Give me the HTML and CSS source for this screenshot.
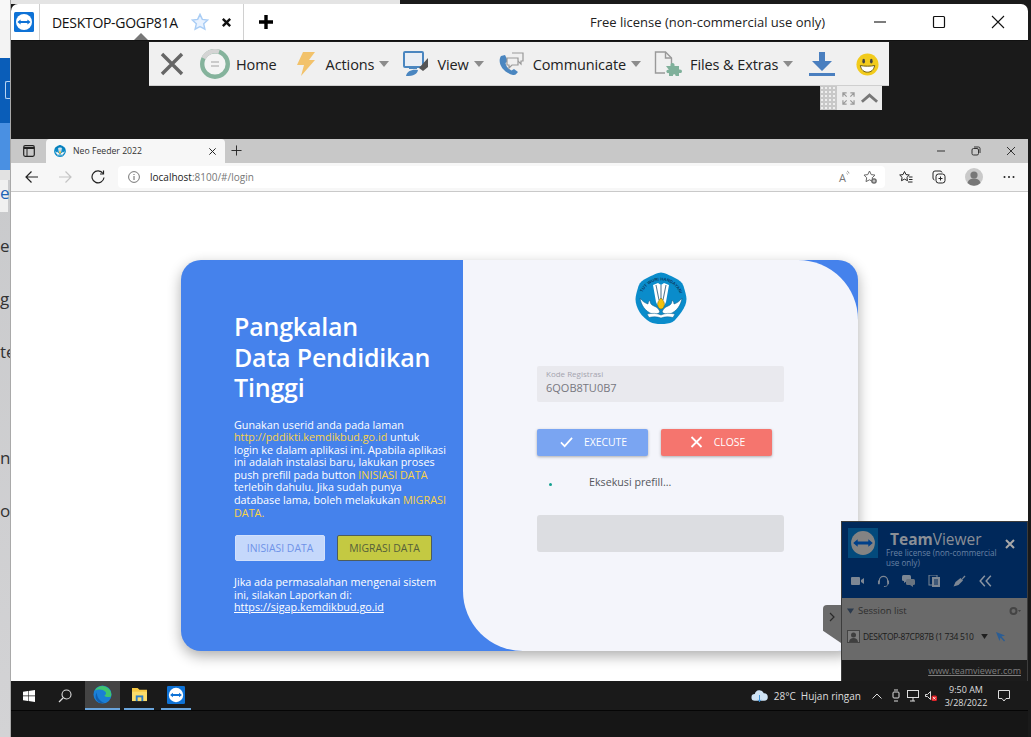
FILE: index.html
```html
<!DOCTYPE html>
<html lang="en">
<head>
    <meta charset="UTF-8">
    <meta name="viewport" content="width=device-width, initial-scale=1.0">
    <title>Neo Feeder 2022 - TeamViewer</title>
    <link rel="stylesheet" href="styles.css">
</head>
<body>
    <svg class="svg-defs" width="0" height="0">
        <defs>
            <symbol id="tv-logo" viewBox="0 0 20 20">
                <rect width="20" height="20" rx="1.5" fill="#0e72d6"/>
                <circle cx="10" cy="10" r="8" fill="#fff"/>
                <path d="M3.4 10l3.2-2.6v1.6h6.8V7.4l3.2 2.6-3.2 2.6V11H6.6v1.6z" fill="#0e72d6"/>
            </symbol>
            <symbol id="emblem" viewBox="0 0 52 52">
                <path d="M26 .5c3 0 9 3 14 5.500 4 2 7 4 8.500 8 1.500 5 3 10 3 13 0 4-2 9-5 13-3 4-6 8-9 10-3 1.500-7 2-11.500 2s-8-.5-11-2c-4-2.500-8-6-10.500-10C2 36 .5 31 .5 27c0-3 1.500-8 3-13 1.500-4 4.500-6 8.500-8 5-2.500 11-5.500 14-5.500z" fill="#0a8ccb"/>
                <path id="emblem-ring" d="M6.500 24a20 20 0 0 1 39 0" fill="none"/>
                <path d="M5 26c1 7 5 13 12 16 3 1 6 0 8-2-1-3-3-5-6-6-3-1-4-3-4-6-1 1-2 2-2 4-3-1-6-3-8-6zM47 26c-1 7-5 13-12 16-3 1-6 0-8-2 1-3 3-5 6-6 3-1 4-3 4-6 1 1 2 2 2 4 3-1 6-3 8-6z" fill="#fff" stroke="#0a5f8e" stroke-width=".6"/>
                <path d="M23 11l3 2 3-2 5 2-3 17c-1 3-3 5-5 5s-4-2-5-5l-3-17z" fill="#fff"/>
                <path d="M21 13l3 15M26 13v14M31 13l-3 15" stroke="#557a94" stroke-width="1.100"/>
                <path d="M12 42c5-1 10-1 14 1 4-2 9-2 14-1l-2 3.500c-4-1-8-1-12 .5-4-1.500-8-1.500-12-.5z" fill="#fff" stroke="#0a5f8e" stroke-width=".5"/>
                <path d="M26 26c2.600 2.500 3.400 4.500 3.400 6.500S28 37 26 37s-3.400-2.500-3.400-4.500.8-4 3.400-6.500z" fill="#f4c20d" stroke="#6b5c10" stroke-width=".5"/>
                <text class="emblem-text"><textPath href="#emblem-ring" startOffset="7%">TUT WURI HANDAYANI</textPath></text>
            </symbol>
            <symbol id="caret" viewBox="0 0 10 6">
                <path d="M0 0h10L5 6z" fill="#8c8c8c"/>
            </symbol>
        </defs>
    </svg>

    <div class="screen">
        <div class="backdrop">
            <div class="backdrop-top"></div>
            <div class="backdrop-hero"><span class="backdrop-icon"></span></div>
            <div class="backdrop-accent"></div>
            <div class="backdrop-rule"></div>
            <ul class="backdrop-list">
                <li class="is-link">e</li>
                <li>e</li>
                <li>g</li>
                <li>te</li>
                <li></li>
                <li>n</li>
                <li>o</li>
            </ul>
        </div>

        <div class="remote-column">
            <div class="top-gap"></div>
            <div class="tv-window">
                <header class="tv-titlebar">
                    <div class="tv-logo-cell">
                        <svg class="tv-logo"><use href="#tv-logo"/></svg>
                    </div>
                    <div class="tv-tab">
                        <span class="tv-tab-name">DESKTOP-GOGP81A</span>
                        <svg class="tv-star" viewBox="0 0 20 20"><path d="M10 1.500l2.600 5.600 6 .7-4.500 4.100 1.300 6L10 15l-5.400 3 1.300-6L1.400 7.800l6-.7z" fill="#e8f2ff" stroke="#a9cdf5" stroke-width="1.600"/></svg>
                        <svg class="tv-tab-close" viewBox="0 0 12 12"><path d="M2 2l8 8M10 2l-8 8" stroke="#111" stroke-width="2.600"/></svg>
                        <span class="tv-notch"></span>
                    </div>
                    <svg class="tv-new-tab" viewBox="0 0 14 14"><path d="M7 0v14M0 7h14" stroke="#000" stroke-width="3.400"/></svg>
                    <span class="tv-license">Free license (non-commercial use only)</span>
                    <div class="tv-window-buttons">
                        <svg viewBox="0 0 14 14"><path d="M1 7h12" stroke="#111" stroke-width="1.100"/></svg>
                        <svg viewBox="0 0 14 14"><rect x="1.500" y="1.500" width="11" height="11" rx="1" fill="none" stroke="#111" stroke-width="1.200"/></svg>
                        <svg viewBox="0 0 14 14"><path d="M1 1l12 12M13 1L1 13" stroke="#111" stroke-width="1.100"/></svg>
                    </div>
                </header>

                <div class="tv-stage">
                    <div class="tv-toolbar-wrap">
                        <nav class="tv-toolbar">
                            <svg class="tb-close" viewBox="0 0 24 24"><path d="M2 2l20 20M22 2L2 22" stroke="#666" stroke-width="3.400"/></svg>
                            <div class="tb-item tb-home">
                                <svg class="tb-icon-home" viewBox="0 0 30 30"><circle cx="15" cy="15" r="12.800" fill="#f4f4f4" stroke="#85b39c" stroke-width="4.400"/><path d="M3.600 9.200A12.800 12.800 0 0 1 19 2.800" fill="none" stroke="#d4d4d4" stroke-width="4.400"/><path d="M11 13h8M11 17h8" stroke="#bdbdbd" stroke-width="1.500"/></svg>
                                <span>Home</span>
                            </div>
                            <div class="tb-item tb-actions">
                                <svg class="tb-icon-bolt" viewBox="0 0 20 26"><path d="M7 1h12l-6 8h6L5 25l3-11H1z" fill="#f2c26b"/></svg>
                                <span>Actions</span>
                                <svg class="tb-caret"><use href="#caret"/></svg>
                            </div>
                            <div class="tb-item tb-view">
                                <svg class="tb-icon-view" viewBox="0 0 26 26"><rect x="1" y="1" width="19" height="15" rx="1" fill="#e9eef5" stroke="#4a86c0" stroke-width="2"/><path d="M6 16h8v2H6z" fill="#4a86c0"/><path d="M16 17l9-10v9l-5 4z" fill="#555"/><path d="M3 25c1-5 6-7 12-6-1 4-4 6-12 6z" fill="#4a86c0"/></svg>
                                <span>View</span>
                                <svg class="tb-caret"><use href="#caret"/></svg>
                            </div>
                            <div class="tb-item tb-communicate">
                                <svg class="tb-icon-comm" viewBox="0 0 28 26"><path d="M4 5C0 11 5 21 16 24c3 .5 4-2 5-3l-4-3-2.500 1.500C11 18 9 15 8.500 12L11 10 8 4z" fill="#4a86c0"/><path d="M15 2h11v8h-2v3l-3-3h-2" fill="#f0f0f0" stroke="#999" stroke-width="1.200"/><path d="M10 7h11v7h-6l-3 3v-3h-2z" fill="#f0f0f0" stroke="#999" stroke-width="1.200"/></svg>
                                <span>Communicate</span>
                                <svg class="tb-caret"><use href="#caret"/></svg>
                            </div>
                            <div class="tb-item tb-files">
                                <svg class="tb-icon-files" viewBox="0 0 30 26"><path d="M11 22H1.500V1h10l6 6v6" fill="none" stroke="#999" stroke-width="1.400"/><path d="M11.500 1v6h6" fill="none" stroke="#999" stroke-width="1.400"/><path d="M12 15h4.500c-1-4 5-4 4 0H25v3.500c4-1 4 4.500 0 3.500v3h-3.500c.5-2.500-3-2.500-2.500 0H15v-3c-3.500 1-3.500-4 0-3z" fill="#7fb09a"/></svg>
                                <span>Files &amp; Extras</span>
                                <svg class="tb-caret"><use href="#caret"/></svg>
                            </div>
                            <svg class="tb-download" viewBox="0 0 26 26"><path d="M10 1h6v9h7L13 20 3 10h7z" fill="#4a7fbf"/><rect y="22" width="26" height="3" fill="#4a7fbf"/></svg>
                            <svg class="tb-smiley" viewBox="0 0 24 24"><circle cx="12" cy="12" r="11.500" fill="#f2cb1c"/><ellipse cx="8" cy="8.500" rx="1.400" ry="2.400" fill="#444"/><ellipse cx="16" cy="8.500" rx="1.400" ry="2.400" fill="#444"/><path d="M4.500 13c3 1 12 1 15 0-1 5-4 7-7.500 7s-6.500-2-7.500-7z" fill="#fff" stroke="#6b5a10" stroke-width="1"/></svg>
                        </nav>
                        <div class="tv-toolbar-handle">
                            <span class="handle-grip"></span>
                            <svg viewBox="0 0 14 14" class="handle-full"><path d="M1 5V1h4M9 1h4v4M13 9v4H9M5 13H1V9M1 1l4 4M13 1L9 5M13 13L9 9M1 13l4-4" fill="none" stroke="#999" stroke-width="1.300"/></svg>
                            <svg viewBox="0 0 20 12" class="handle-up"><path d="M2 10l8-7 8 7" fill="none" stroke="#777" stroke-width="3"/></svg>
                        </div>
                    </div>
                </div>

                <div class="edge">
                    <div class="edge-tabs">
                        <div class="edge-sidebar-btn">
                            <svg viewBox="0 0 12 12"><rect x=".7" y=".7" width="10.600" height="10.600" rx="1.500" fill="none" stroke="#222" stroke-width="1.200"/><path d="M1 3h10" stroke="#222" stroke-width="2"/><path d="M4 3v8" stroke="#222" stroke-width="1"/></svg>
                        </div>
                        <div class="edge-tab">
                            <svg class="edge-favicon"><use href="#emblem"/></svg>
                            <span>Neo Feeder 2022</span>
                            <svg class="edge-tab-close" viewBox="0 0 10 10"><path d="M1.500 1.500l7 7M8.500 1.500l-7 7" stroke="#222" stroke-width="1.100"/></svg>
                        </div>
                        <svg class="edge-new-tab" viewBox="0 0 12 12"><path d="M6 .5v11M.5 6h11" stroke="#222" stroke-width="1"/></svg>
                        <div class="edge-window-buttons">
                            <svg viewBox="0 0 10 10"><path d="M1 5h8" stroke="#333" stroke-width="1"/></svg>
                            <svg viewBox="0 0 10 10"><rect x="1" y="2.500" width="6.500" height="6.500" rx="1.500" fill="none" stroke="#333"/><path d="M3 1h4.500A1.500 1.500 0 0 1 9 2.500V7" fill="none" stroke="#333"/></svg>
                            <svg viewBox="0 0 10 10"><path d="M1 1l8 8M9 1L1 9" stroke="#333" stroke-width="1"/></svg>
                        </div>
                    </div>
                    <div class="edge-nav">
                        <svg class="nav-btn" viewBox="0 0 14 14"><path d="M13 7H1M6.500 1.500L1 7l5.500 5.500" fill="none" stroke="#222" stroke-width="1.200"/></svg>
                        <svg class="nav-btn" viewBox="0 0 14 14"><path d="M1 7h12M7.500 1.500L13 7l-5.500 5.500" fill="none" stroke="#c4c4c4" stroke-width="1.200"/></svg>
                        <svg class="nav-btn" viewBox="0 0 14 14"><path d="M12 3.500A6 6 0 1 0 13 7.500" fill="none" stroke="#222" stroke-width="1.200"/><path d="M12.500 .5v3.500H9" fill="none" stroke="#222" stroke-width="1.200"/></svg>
                        <div class="address">
                            <svg class="address-info" viewBox="0 0 12 12"><circle cx="6" cy="6" r="5.400" fill="none" stroke="#666" stroke-width=".9"/><path d="M6 5v4M6 3v1" stroke="#666" stroke-width="1"/></svg>
                            <span class="address-url"><b>localhost</b>:8100/#/login</span>
                            <span class="address-read">A<svg viewBox="0 0 5 7"><path d="M1 1a3 3 0 0 1 2 2.500M.5 3a2 2 0 0 1 1 1.500" fill="none" stroke="#777" stroke-width=".7"/></svg></span>
                            <svg class="address-fav" viewBox="0 0 14 14"><path d="M6.500 1l1.700 3.600 3.800.5-2.800 2.700.7 3.800-3.400-1.800L3 11.600l.7-3.800L1 5.100l3.800-.5z" fill="none" stroke="#666"/><circle cx="11" cy="11" r="2.800" fill="#666"/><path d="M11 9.500v3M9.500 11h3" stroke="#fff" stroke-width=".7"/></svg>
                        </div>
                        <div class="edge-actions">
                            <svg viewBox="0 0 14 14"><path d="M5.500 1.500l1.500 3.100 3.300.4-2.400 2.400.6 3.300-3-1.600-3 1.600.6-3.300L.7 5l3.300-.4zM10 7h3.500M10 9.500h3.500M9 12h4.500" fill="none" stroke="#222"/></svg>
                            <svg viewBox="0 0 14 14"><rect x="4" y="4" width="9" height="9" rx="2.500" fill="none" stroke="#222"/><path d="M10 2.500A2 2 0 0 0 8 1H3a2 2 0 0 0-2 2v5a2 2 0 0 0 1.500 2M8.500 6.500v4M6.500 8.500h4" fill="none" stroke="#222"/></svg>
                            <span class="edge-avatar"><svg viewBox="0 0 18 18"><circle cx="9" cy="9" r="9" fill="#c9c9c9"/><circle cx="9" cy="7" r="3.600" fill="#777"/><path d="M2.500 15c1-3.500 3.500-4.500 6.500-4.500s5.500 1 6.500 4.500a9 9 0 0 1-13 0z" fill="#777"/></svg></span>
                            <svg viewBox="0 0 14 14"><circle cx="2.500" cy="7" r="1" fill="#222"/><circle cx="7" cy="7" r="1" fill="#222"/><circle cx="11.500" cy="7" r="1" fill="#222"/></svg>
                        </div>
                    </div>

                    <main class="edge-page">
                        <section class="login-card">
                            <div class="login-info">
                                <h1>Pangkalan<br>Data Pendidikan<br>Tinggi</h1>
                                <p class="login-text">Gunakan userid anda pada laman<br>
                                    <span class="hl">http://pddikti.kemdikbud.go.id</span> untuk<br>
                                    login ke dalam aplikasi ini. Apabila aplikasi<br>
                                    ini adalah instalasi baru, lakukan proses<br>
                                    push prefill pada button <span class="hl">INISIASI DATA</span><br>
                                    terlebih dahulu. Jika sudah punya<br>
                                    database lama, boleh melakukan <span class="hl">MIGRASI<br>DATA.</span></p>
                                <div class="login-actions">
                                    <button class="btn-init" type="button">INISIASI DATA</button>
                                    <button class="btn-migrate" type="button">MIGRASI DATA</button>
                                </div>
                                <p class="login-text login-help">Jika ada permasalahan mengenai sistem<br>
                                    ini, silakan Laporkan di:<br>
                                    <a href="#">https://sigap.kemdikbud.go.id</a></p>
                            </div>
                            <div class="login-form">
                                <svg class="form-logo"><use href="#emblem"/></svg>
                                <div class="form-field">
                                    <label>Kode Registrasi</label>
                                    <span>6QOB8TU0B7</span>
                                </div>
                                <div class="form-buttons">
                                    <button class="btn-exec" type="button">
                                        <svg viewBox="0 0 14 12"><path d="M1 6.500L5 10.500 13 1.500" fill="none" stroke="#fff" stroke-width="1.800"/></svg>
                                        EXECUTE
                                    </button>
                                    <button class="btn-close" type="button">
                                        <svg viewBox="0 0 12 12"><path d="M1 1l10 10M11 1L1 11" stroke="#fff" stroke-width="1.800"/></svg>
                                        CLOSE
                                    </button>
                                </div>
                                <div class="form-status">
                                    <span class="status-dot"></span>
                                    <span>Eksekusi prefill...</span>
                                </div>
                                <div class="form-log"></div>
                            </div>
                        </section>
                    </main>
                </div>

                <footer class="taskbar">
                    <svg class="start" viewBox="0 0 12 12"><path d="M0 1.700l5-.7v4.600H0zM5.600 .9L12 0v5.600H5.600zM0 6.200h5v4.700l-5-.7zM5.600 6.200H12V12l-6.400-.9z" fill="#fff"/></svg>
                    <svg class="task-search" viewBox="0 0 14 14"><circle cx="8.500" cy="5.500" r="4.500" fill="none" stroke="#ddd" stroke-width="1.100"/><path d="M5 9l-4 4" stroke="#ddd" stroke-width="1.300"/></svg>
                    <div class="task-app task-edge is-active">
                        <svg viewBox="0 0 20 20"><circle cx="10" cy="10" r="9.500" fill="#1a7fd6"/><path d="M2 6c2-5 8-6 12-4 4 2 6 6 5 10-2 1-6 1-7-1 2-1 2-3 1-4-3-3-8-3-11-1z" fill="#3fc56f"/><path d="M8 19c-4-1-7-6-4-11 0 5 3 9 8 11z" fill="#0f5fb0"/></svg>
                    </div>
                    <div class="task-app task-files">
                        <svg viewBox="0 0 18 16"><path d="M1 1h6l2 2h8v12H1z" fill="#f7c843"/><path d="M1 5h16v10H1z" fill="#fbdc6a"/><rect x="5" y="9" width="8" height="6" fill="#2b7ec9"/><rect x="7" y="11" width="4" height="4" fill="#fbdc6a"/></svg>
                    </div>
                    <div class="task-app task-tv">
                        <svg><use href="#tv-logo"/></svg>
                    </div>
                    <div class="tray">
                        <svg class="tray-cloud" viewBox="0 0 18 14"><path d="M4 12a3.500 3.500 0 0 1 0-7 5 5 0 0 1 9.500-1A4 4 0 0 1 14 12z" fill="#cfe3f5"/><path d="M9 6v7M7.500 11L9 13l1.500-2" stroke="#3b8fd6" fill="none"/></svg>
                        <span class="tray-temp">28°C</span>
                        <span class="tray-weather">Hujan ringan</span>
                        <svg class="tray-up" viewBox="0 0 10 6"><path d="M.5 5.500L5 1l4.500 4.500" fill="none" stroke="#ddd"/></svg>
                        <svg class="tray-meet" viewBox="0 0 8 13"><rect x="1" y="3" width="6" height="6" rx="1" fill="none" stroke="#ddd"/><path d="M2 1h4M2 12h4" stroke="#ddd"/></svg>
                        <svg class="tray-net" viewBox="0 0 12 12"><rect x=".5" y=".5" width="11" height="7" fill="none" stroke="#ddd"/><path d="M6 8v3M3 11h5" stroke="#ddd"/></svg>
                        <svg class="tray-sound" viewBox="0 0 12 12"><path d="M.5 4.500h2l3-3v8l-3-3h-2z" fill="none" stroke="#ddd"/><rect x="6.500" y="5.500" width="5.500" height="5.500" rx="1.500" fill="#e0242a"/><path d="M8 7l2.500 2.500M10.500 7L8 9.500" stroke="#fff" stroke-width=".8"/></svg>
                        <div class="tray-clock"><span>9:50 AM</span><span>3/28/2022</span></div>
                        <svg class="tray-notify" viewBox="0 0 12 12"><path d="M.5 .5h11v8H8L6 11 4 8.500H.5z" fill="none" stroke="#ddd"/></svg>
                    </div>
                </footer>
            </div>
            <div class="bottom-gap"></div>
        </div>

        <aside class="tv-panel">
            <div class="tv-panel-flap">
                <svg viewBox="0 0 6 10"><path d="M1 1l4 4-4 4" fill="none" stroke="#2a2a2a" stroke-width="1.200"/></svg>
            </div>
            <div class="tv-panel-head">
                <div class="tv-panel-brand">
                    <span class="tv-panel-logo">
                        <svg viewBox="0 0 20 20"><circle cx="10" cy="10" r="8.500" fill="#838383"/><path d="M3 10l3.200-2.600v1.600h7.600V7.400L17 10l-3.200 2.600V11H6.200v1.600z" fill="#00408a"/></svg>
                    </span>
                    <div class="tv-panel-title">
                        <strong>Team<span>Viewer</span></strong>
                        <small>Free license (non-commercial use only)</small>
                    </div>
                    <svg class="tv-panel-close" viewBox="0 0 10 10"><path d="M1 1l8 8M9 1L1 9" stroke="#a8a8a8" stroke-width="2"/></svg>
                </div>
                <div class="tv-panel-tools">
                    <svg viewBox="0 0 13 10"><rect y="1" width="9" height="8" rx="1" fill="#7d8794"/><path d="M10 4l3-2v6l-3-2z" fill="#7d8794"/></svg>
                    <svg viewBox="0 0 13 13"><path d="M2 8V6a4.500 4.500 0 0 1 9 0v2" fill="none" stroke="#7d8794" stroke-width="1.300"/><rect x="0.500" y="6" width="2" height="4" fill="#7d8794"/><rect x="10.500" y="6" width="2" height="4" fill="#7d8794"/><path d="M11 10c0 2-2 2.500-4 2.500" fill="none" stroke="#7d8794"/></svg>
                    <svg viewBox="0 0 13 12"><rect width="9" height="6" rx="1.500" fill="#7d8794"/><path d="M2 5v3l3-2z" fill="#7d8794"/><rect x="4" y="4" width="9" height="6" rx="1.500" fill="#6a7480"/><path d="M11 9v3l-3-2z" fill="#6a7480"/></svg>
                    <svg viewBox="0 0 11 12"><rect width="8" height="10" fill="none" stroke="#7d8794"/><rect x="3" y="2" width="8" height="10" fill="#7d8794"/><path d="M5 5h4M5 7h4M5 9h4" stroke="#00285a"/></svg>
                    <svg viewBox="0 0 12 12"><path d="M8 4l3-3.500L12 1.500 8.500 5z" fill="#7d8794"/><path d="M7 3l2.500 2.500L5 10 0 11.500 2 7z" fill="#7d8794"/></svg>
                    <svg viewBox="0 0 9 9"><path d="M4 .5L.5 4.500 4 8.500M8.500 .5L5 4.500l3.500 4" fill="none" stroke="#8b95a2" stroke-width="1.100"/></svg>
                </div>
            </div>
            <div class="tv-panel-sessions">
                <div class="session-head">
                    <svg class="session-arrow" viewBox="0 0 8 6"><path d="M0 0h8L4 6z" fill="#2b3a4d"/></svg>
                    <span>Session list</span>
                    <svg class="session-gear" viewBox="0 0 12 10"><circle cx="4.500" cy="5" r="3" fill="none" stroke="#444" stroke-width="2"/><path d="M9 4h3L10.500 6z" fill="#444"/></svg>
                </div>
                <div class="session-row">
                    <svg class="session-avatar" viewBox="0 0 13 13"><rect x=".5" y=".5" width="12" height="12" fill="#7c7c7c" stroke="#444"/><circle cx="6.500" cy="5" r="2.500" fill="#3f3f3f"/><path d="M2 12c.5-3 2-4 4.500-4s4 1 4.500 4z" fill="#3f3f3f"/></svg>
                    <span class="session-name">DESKTOP-87CP87B (1 734 510</span>
                    <svg class="session-caret" viewBox="0 0 8 6"><path d="M0 0h8L4 6z" fill="#1f1f1f"/></svg>
                    <svg class="session-cursor" viewBox="0 0 10 10"><path d="M0 0l9 3.500-3.500 1L9 8.500 8 9.500 4.500 5.500l-1 3.500z" fill="#2b5d94"/></svg>
                </div>
            </div>
            <div class="tv-panel-foot"><a href="#">www.teamviewer.com</a></div>
        </aside>
    </div>
</body>
</html>
```

FILE: styles.css
```css
* {
    box-sizing: border-box;
}

html, body {
    margin: 0;
    padding: 0;
}

body {
    width: 1031px;
    height: 737px;
    overflow: hidden;
    background: #1a1a1a;
    font-family: "Open Sans", "Noto Sans", Arial, sans-serif;
}

button {
    font-family: inherit;
    cursor: pointer;
}

.svg-defs {
    display: block;
    height: 0;
}

.screen {
    position: relative;
    display: flex;
    width: 1031px;
    height: 737px;
}

/* desktop window behind the remote session */
.backdrop {
    flex: 0 0 11px;
    display: flex;
    flex-direction: column;
    background: linear-gradient(180deg, #c6c7c9, #d3d3d5);
    border-right: 1px solid #a9a9a9;
    overflow: hidden;
}

.backdrop-top {
    height: 58px;
    background: #f3f3f3;
    border-top: 20px solid #f8f8f8;
}

.backdrop-hero {
    height: 65px;
    background: #0a5db8;
    padding-top: 23px;
}

.backdrop-icon {
    display: block;
    width: 8px;
    height: 18px;
    margin-left: 5px;
    border: 1px solid #b8d4f2;
    border-right: 0;
    border-radius: 2px 0 0 2px;
}

.backdrop-accent {
    height: 47px;
    background: #4a90e2;
}

.backdrop-rule {
    height: 10px;
    background: #e2e2e2;
}

.backdrop-list {
    list-style: none;
    margin: 0;
    padding: 0;
    font-size: 17px;
    color: #333;
}

.backdrop-list li {
    height: 53px;
    line-height: 26px;
    text-align: right;
    white-space: nowrap;
    margin-right: 2px;
}

.backdrop-list li.is-link {
    color: #1c63b7;
    background: linear-gradient(180deg, #f0f0f0 32px, transparent 32px);
}

/* remote column */
.remote-column {
    flex: 0 0 1017px;
    display: flex;
    flex-direction: column;
}

.top-gap {
    height: 4px;
    background: linear-gradient(90deg, #e4e4e4 389px, #1a1a1a 389px);
}

.tv-window {
    height: 707px;
    display: flex;
    flex-direction: column;
}

.bottom-gap {
    flex: 1;
    background: #161616;
}

/* TeamViewer title bar */
.tv-titlebar {
    flex: 0 0 37px;
    display: flex;
    align-items: center;
    background: #fff;
    border-bottom: 1px solid #111;
    border-radius: 7px 7px 0 0;
}

.tv-logo-cell {
    width: 29px;
    height: 36px;
    padding: 8px 0 0 3px;
    border-right: 1px solid #d0d0d0;
    flex: none;
}

.tv-logo {
    display: block;
    width: 20px;
    height: 20px;
}

.tv-tab {
    position: relative;
    flex: none;
    display: flex;
    align-items: center;
    width: 204px;
    height: 36px;
    padding-left: 12px;
    border-right: 1px solid #d0d0d0;
}

.tv-tab-name {
    font-size: 14px;
    letter-spacing: -0.300px;
    color: #111;
    width: 139px;
    white-space: nowrap;
}

.tv-star {
    width: 18px;
    height: 18px;
}

.tv-tab-close {
    width: 11px;
    height: 11px;
    margin-left: 12px;
}

.tv-notch {
    position: absolute;
    left: 94px;
    bottom: 0;
    border-left: 7px solid transparent;
    border-right: 7px solid transparent;
    border-bottom: 7px solid #777;
}

.tv-new-tab {
    width: 14px;
    height: 14px;
    margin-left: 15px;
    flex: none;
}

.tv-license {
    margin-left: 317px;
    font-size: 13px;
    color: #222;
    width: 238px;
    flex: none;
    white-space: nowrap;
}

.tv-window-buttons {
    display: flex;
    gap: 45px;
    margin-left: 45px;
}

.tv-window-buttons svg {
    width: 14px;
    height: 14px;
}

/* dark strip with the floating toolbar */
.tv-stage {
    flex: 0 0 98px;
    display: flex;
    justify-content: center;
    background: #1a1a1a;
    padding: 1px 1px 0 0;
}

.tv-toolbar-wrap {
    width: 740px;
    display: flex;
    flex-direction: column;
}

.tv-toolbar {
    height: 44px;
    display: flex;
    align-items: center;
    background: #f0f0f0;
    border-bottom: 1px solid #cfcfcf;
    padding-top: 1px;
    font-size: 14.500px;
    letter-spacing: -0.100px;
    color: #222;
}

.tb-close {
    width: 24px;
    height: 24px;
    margin-left: 11px;
    flex: none;
}

.tb-item {
    display: flex;
    align-items: center;
    flex: none;
    white-space: nowrap;
}

.tb-caret {
    width: 10px;
    height: 6px;
    margin-left: 5px;
}

.tb-home {
    margin-left: 16px;
}

.tb-icon-home {
    width: 30px;
    height: 30px;
    margin-right: 6px;
}

.tb-actions {
    margin-left: 19px;
}

.tb-icon-bolt {
    width: 20px;
    height: 26px;
    margin-right: 10px;
}

.tb-view {
    margin-left: 14px;
}

.tb-icon-view {
    width: 26px;
    height: 26px;
    margin-right: 8px;
}

.tb-communicate {
    margin-left: 13px;
}

.tb-icon-comm {
    width: 28px;
    height: 26px;
    margin-right: 8px;
}

.tb-files {
    margin-left: 13px;
}

.tb-icon-files {
    width: 30px;
    height: 26px;
    margin-right: 6px;
}

.tb-download {
    width: 26px;
    height: 26px;
    margin-left: 16px;
    flex: none;
}

.tb-smiley {
    width: 23px;
    height: 23px;
    margin-left: 21px;
    flex: none;
}

.tv-toolbar-handle {
    align-self: flex-end;
    margin-right: 7px;
    width: 62px;
    height: 24px;
    display: flex;
    align-items: center;
    background: #ececec;
}

.handle-grip {
    width: 17px;
    height: 24px;
    background-color: #c8c8c8;
    background-image: radial-gradient(#eee 1.300px, transparent 1.400px);
    background-size: 4px 4px;
}

.handle-full {
    width: 13px;
    height: 13px;
    margin-left: 5px;
}

.handle-up {
    width: 19px;
    height: 12px;
    margin-left: 5px;
}

/* Edge browser */
.edge {
    flex: 0 0 542px;
    display: flex;
    flex-direction: column;
}

.edge-tabs {
    flex: 0 0 24px;
    display: flex;
    background: #c8c8c8;
}

.edge-sidebar-btn {
    width: 35px;
    display: flex;
    justify-content: center;
    align-items: center;
    flex: none;
}

.edge-sidebar-btn svg {
    width: 12px;
    height: 12px;
}

.edge-tab {
    width: 179px;
    flex: none;
    display: flex;
    align-items: center;
    background: #f7f7f7;
    border-radius: 4px 4px 0 0;
    padding: 0 8px;
    font-size: 8.700px;
    color: #333;
}

.edge-favicon {
    width: 12px;
    height: 12px;
    margin-right: 7px;
    flex: none;
}

.edge-tab span {
    flex: 1;
    white-space: nowrap;
}

.edge-tab-close {
    width: 9px;
    height: 9px;
}

.edge-new-tab {
    width: 11px;
    height: 11px;
    margin: 6px 0 0 6px;
    flex: none;
}

.edge-window-buttons {
    margin-left: auto;
    display: flex;
    align-items: center;
    gap: 25px;
    padding-right: 12px;
}

.edge-window-buttons svg {
    width: 10px;
    height: 10px;
}

.edge-nav {
    flex: 0 0 29px;
    display: flex;
    align-items: center;
    background: #f7f7f7;
    border-bottom: 1px solid #c9c9c9;
}

.nav-btn {
    width: 14px;
    height: 14px;
    margin-left: 13px;
    margin-right: 6px;
    flex: none;
}

.nav-btn:first-child {
    margin-left: 14px;
}

.address {
    width: 767px;
    height: 22px;
    margin-left: 7px;
    display: flex;
    align-items: center;
    background: #fff;
    border-radius: 4px;
    padding-left: 10px;
    font-size: 10px;
    color: #777;
}

.address-info {
    width: 12px;
    height: 12px;
    margin-right: 10px;
    flex: none;
}

.address-url {
    flex: 1;
}

.address-url b {
    font-weight: 400;
    color: #222;
}

.address-read {
    display: flex;
    align-items: flex-start;
    font-size: 11px;
    color: #777;
    margin-right: 12px;
}

.address-read svg {
    width: 5px;
    height: 7px;
}

.address-fav {
    width: 14px;
    height: 14px;
    margin-right: 8px;
}

.edge-actions {
    display: flex;
    align-items: center;
    gap: 19px;
    margin-left: 14px;
}

.edge-actions svg {
    width: 14px;
    height: 14px;
    display: block;
}

.edge-actions .edge-avatar svg {
    width: 18px;
    height: 18px;
}

/* login page */
.edge-page {
    flex: 1;
    background: #fff;
    padding: 68px 0 0 170px;
}

.login-card {
    width: 677px;
    height: 391px;
    display: flex;
    background: #4582ec;
    border-radius: 20px;
    box-shadow: 0 5px 14px rgba(0, 0, 0, 0.32);
}

.login-info {
    width: 282px;
    flex: none;
    padding: 51px 0 0 53px;
    color: #fff;
}

.login-info h1 {
    margin: 0;
    font-size: 25px;
    letter-spacing: -0.200px;
    font-weight: 600;
    line-height: 30.500px;
}

.login-text {
    margin: 16px 0 0;
    font-size: 10.800px;
    line-height: 12.600px;
    white-space: nowrap;
}

.hl {
    color: #f8d24a;
}

.login-actions {
    display: flex;
    gap: 12px;
    margin: 16px 0 0 1px;
}

.login-actions button {
    height: 26px;
    font-size: 10.400px;
    padding: 0;
    border-radius: 2px;
}

.btn-init {
    width: 90px;
    background: #c5d8fb;
    border: 1px solid #d2e0fb;
    color: #6f93e8;
}

.btn-migrate {
    width: 95px;
    background: #c4c942;
    border: 1px solid #4d5c5c;
    color: #55603a;
}

.login-help {
    margin-top: 15px;
}

.login-help a {
    color: #fff;
}

.login-form {
    flex: 1;
    background: #f4f5fb;
    border-radius: 0 60px 20px 60px;
    padding: 12px 0 0 74px;
}

.form-logo {
    display: block;
    width: 52px;
    height: 52px;
    margin-left: 98px;
}

.form-field {
    width: 247px;
    height: 36px;
    margin-top: 42px;
    background: #e9e9ee;
    border-radius: 2px;
    padding: 3px 9px;
    display: flex;
    flex-direction: column;
}

.form-field label {
    font-size: 8px;
    line-height: 10px;
    color: #a4a4ae;
}

.form-field span {
    font-size: 11px;
    line-height: 18px;
    color: #77777f;
}

.form-buttons {
    display: flex;
    gap: 13px;
    margin: 27px 0 0;
}

.form-buttons button {
    width: 111px;
    height: 27px;
    border: 0;
    border-radius: 2px;
    color: #fff;
    font-size: 10.400px;
    display: flex;
    align-items: center;
    justify-content: center;
    gap: 11px;
    padding: 0 0 2px 2px;
    box-shadow: 0 1px 3px rgba(0, 0, 0, 0.3);
}

.form-buttons svg {
    width: 13px;
    height: 12px;
}

.btn-exec {
    background: #7aa5f2;
}

.btn-close {
    background: #f5756e;
}

.form-status {
    display: flex;
    align-items: center;
    margin: 17px 0 0 12px;
    font-size: 10.700px;
    color: #55555c;
    height: 17px;
}

.status-dot {
    width: 3px;
    height: 3px;
    border-radius: 50%;
    background: #12a08f;
    margin: 5px 37px 0 0;
}

.form-log {
    width: 247px;
    height: 37px;
    margin-top: 25px;
    background: #dcdde1;
    border-radius: 3px;
}

/* taskbar */
.taskbar {
    flex: 0 0 30px;
    display: flex;
    align-items: center;
    background: #1a1a1a;
    border-bottom: 1px solid #050505;
    color: #ddd;
    font-size: 10px;
}

.start {
    width: 12px;
    height: 12px;
    margin-left: 12px;
    flex: none;
}

.task-search {
    width: 14px;
    height: 14px;
    margin-left: 23px;
    flex: none;
}

.task-app {
    height: 29px;
    display: flex;
    align-items: center;
    justify-content: center;
    border-bottom: 2px solid #6aa5dc;
    flex: none;
}

.task-app.is-active {
    background: #444;
}

.task-edge {
    width: 35px;
    margin-left: 13px;
}

.task-edge svg {
    width: 19px;
    height: 19px;
}

.task-files {
    width: 30px;
    margin-left: 4px;
}

.task-files svg {
    width: 17px;
    height: 15px;
}

.task-tv {
    width: 30px;
    margin-left: 7px;
}

.task-tv svg {
    width: 18px;
    height: 18px;
}

.tray {
    margin-left: auto;
    display: flex;
    align-items: center;
    padding-right: 18px;
    white-space: nowrap;
}

.tray-cloud {
    width: 17px;
    height: 14px;
    margin-right: 6px;
}

.tray-temp {
    margin-right: 5px;
}

.tray-up {
    width: 10px;
    height: 6px;
    margin: 0 10px 0 11px;
}

.tray-meet {
    width: 8px;
    height: 13px;
    margin-right: 7px;
}

.tray-net {
    width: 12px;
    height: 12px;
    margin-right: 6px;
}

.tray-sound {
    width: 12px;
    height: 12px;
}

.tray-clock {
    width: 40px;
    margin: 0 12px 0 9px;
    display: flex;
    flex-direction: column;
    align-items: center;
    font-size: 9px;
    line-height: 13px;
}

.tray-notify {
    width: 12px;
    height: 12px;
}

/* TeamViewer side panel, sits over the remote screen */
.tv-panel {
    position: absolute;
    left: 841px;
    top: 521px;
    width: 187px;
    height: 160px;
    display: flex;
    flex-direction: column;
    border: 1px solid #3c3c3c;
    border-bottom: 0;
}

.tv-panel-flap {
    position: absolute;
    left: -19px;
    top: 83px;
    width: 18px;
    height: 38px;
    background: #6b6b6b;
    border-radius: 4px 0 0 4px;
    clip-path: polygon(0 0, 100% 0, 100% 100%, 0 68%);
    padding: 7px 0 0 6px;
}

.tv-panel-flap svg {
    display: block;
    width: 6px;
    height: 10px;
}

.tv-panel-head {
    flex: 0 0 76px;
    background: #00285a;
    padding: 6px 0 0 6px;
}

.tv-panel-brand {
    display: flex;
    align-items: flex-start;
}

.tv-panel-logo {
    width: 30px;
    height: 30px;
    background: #034a7c;
    padding: 1px;
    flex: none;
}

.tv-panel-logo svg {
    display: block;
    width: 28px;
    height: 28px;
}

.tv-panel-title {
    margin-left: 8px;
    width: 117px;
}

.tv-panel-title strong {
    display: block;
    font-size: 15.500px;
    line-height: 18px;
    padding: 2px 0 0 4px;
    color: #8b8f96;
    font-weight: 700;
}

.tv-panel-title strong span {
    font-weight: 400;
}

.tv-panel-title small {
    display: block;
    font-size: 8.100px;
    line-height: 10px;
    color: #6882a4;
}

.tv-panel-close {
    width: 10px;
    height: 10px;
    margin: 11px 0 0 2px;
}

.tv-panel-tools {
    display: flex;
    align-items: center;
    gap: 12.500px;
    margin: 7px 0 0 3px;
}

.tv-panel-tools svg {
    width: 13px;
    height: 12px;
}

.tv-panel-sessions {
    flex: 0 0 62px;
    background: #6a6a6a;
    padding: 6px 6px 0 5px;
}

.session-head {
    display: flex;
    align-items: center;
    font-size: 9.500px;
    color: #2e2e2e;
}

.session-arrow {
    width: 7px;
    height: 6px;
    margin-right: 4px;
}

.session-gear {
    width: 12px;
    height: 10px;
    margin-left: auto;
}

.session-row {
    display: flex;
    align-items: center;
    margin-top: 13px;
    font-size: 8.500px;
    color: #1b1b1b;
    white-space: nowrap;
}

.session-avatar {
    width: 13px;
    height: 13px;
    margin-right: 3px;
    flex: none;
}

.session-name {
    width: 112px;
    letter-spacing: -0.300px;
}

.session-caret {
    width: 7px;
    height: 5px;
    margin-left: 6px;
}

.session-cursor {
    width: 10px;
    height: 10px;
    margin-left: 8px;
}

.tv-panel-foot {
    flex: 1;
    background: #1c1c1c;
    text-align: right;
    padding: 4px 6px 0 0;
    font-size: 9px;
}

.tv-panel-foot a {
    color: #7e7e7e;
}

.emblem-text {
    font-family: "Liberation Sans", Arial, sans-serif;
    font-size: 4.300px;
    font-weight: 700;
    fill: #0a3c66;
}
```
